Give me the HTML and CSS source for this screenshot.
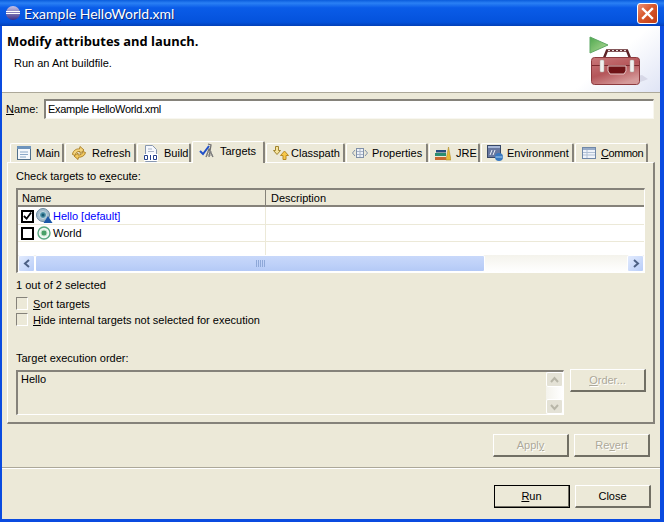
FILE: index.html
```html
<!DOCTYPE html>
<html lang="en">

<head>
  <meta charset="UTF-8">
  <title>Example HelloWorld.xml</title>
  <link rel="stylesheet" href="styles.css">
</head>

<body>
  <div class="window">
    <div class="titlebar">
      <svg class="title-icon" width="16" height="16" viewBox="0 0 16 16">
        <defs>
          <linearGradient id="ecl" x1="0" y1="0" x2="0" y2="1">
            <stop offset="0" stop-color="#c8c4e8" />
            <stop offset="1" stop-color="#3b2f86" />
          </linearGradient>
        </defs>
        <circle cx="8" cy="8" r="7" fill="url(#ecl)" />
        <path d="M1 6.5h14M1 8.5h14" stroke="#fff" stroke-width="1" />
      </svg>
      <span class="title-text">Example HelloWorld.xml</span>
      <div class="close-btn">
        <svg width="21" height="21" viewBox="0 0 21 21">
          <path d="M6 6l9 9M15 6l-9 9" stroke="#fff" stroke-width="2.4" stroke-linecap="square" />
        </svg>
      </div>
    </div>

    <div class="client">
      <!-- banner -->
      <div class="header">
        <div class="header-text">
          <div class="header-title">Modify attributes and launch.</div>
          <div class="header-sub">Run an Ant buildfile.</div>
        </div>
        <svg class="toolbox" width="60" height="54" viewBox="0 0 60 54">
          <defs>
            <linearGradient id="play" x1="0" y1="0" x2="1" y2="1">
              <stop offset="0" stop-color="#4fa84f" />
              <stop offset="1" stop-color="#b4dc98" />
            </linearGradient>
            <linearGradient id="box" x1="0" y1="0" x2="0.6" y2="1">
              <stop offset="0" stop-color="#c9787a" />
              <stop offset="0.55" stop-color="#b5565a" />
              <stop offset="1" stop-color="#d59a9a" />
            </linearGradient>
          </defs>
          <path d="M2 1l18 8-18 8z" fill="url(#play)" stroke="#5fa865" stroke-width="1" />
          <path d="M16 22l3-7.500h20l3 7.500" fill="none" stroke="#5c2226" stroke-width="2.400" />
          <path d="M20 14.500h18" stroke="#e8dcdc" stroke-width="1" stroke-dasharray="2 2" />
          <path d="M6 48q40 2 54-5l-6-4z" fill="#cfcfe0" opacity="0.7" />
          <rect x="3.500" y="21.500" width="48" height="27" rx="3" fill="url(#box)" stroke="#8d3a3e" />
          <path d="M4 29.500h47" stroke="#7c2a2e" stroke-width="1" />
          <path d="M20 30h18v5l-2 3H22l-2-3z" fill="#6e1216" stroke="#e6c6c6" stroke-width="1" />
          <rect x="12" y="24" width="4" height="12" rx="1" fill="#f0f0ee" stroke="#a8a8a0" stroke-width="0.5" />
          <rect x="42" y="24" width="4" height="12" rx="1" fill="#f0f0ee" stroke="#a8a8a0" stroke-width="0.5" />
        </svg>
      </div>

      <div class="name-row">
        <label class="name-label"><u>N</u>ame:</label>
        <div class="name-input">Example HelloWorld.xml</div>
      </div>

      <!-- tab folder -->
      <div class="tabs">
        <div class="tab tab-main">
          <svg width="16" height="16" viewBox="0 0 16 16">
            <rect x="1.5" y="1.5" width="13" height="13" fill="#f4f8fc" stroke="#50708c" />
            <rect x="1" y="1" width="14" height="3" fill="#6e94bc" />
            <path d="M4 7h8M4 9.500h8M4 12h6" stroke="#8aa8c8" />
          </svg>
          <span>Main</span>
        </div>
        <div class="tab tab-refresh">
          <svg width="16" height="16" viewBox="0 0 16 16">
            <path d="M1.500 9.500C2 5 6 3.500 8.500 4L9 1.500 13 5 9 8.500V6.500C6 6 4.500 8 4 10.500z" fill="#f4d47c" stroke="#a87c20" stroke-width="0.900" />
            <path d="M14.500 7.500C14 11 10 12.500 7.500 12.200L7 14.500 3 11 7 8v2C10 10.300 11.500 8.500 12 6.500z" fill="#f0c860" stroke="#a87c20" stroke-width="0.900" />
          </svg>
          <span>Refresh</span>
        </div>
        <div class="tab tab-build">
          <svg width="16" height="17" viewBox="0 0 16 17">
            <path d="M2.500 .5h7l4 4v12h-11z" fill="#f6f8fc" stroke="#8898b0" />
            <path d="M5 4h4M5 6.500h6" stroke="#a8b4c8" />
            <rect x="1" y="9" width="14" height="7" fill="#fff" />
            <path d="M1.500 10.500h3v4h-3zM7.500 10v5M10.500 10.500h3v4h-3z" fill="none" stroke="#24408c" />
          </svg>
          <span>Build</span>
        </div>
        <div class="tab tab-targets selected">
          <svg width="17" height="16" viewBox="0 0 17 16">
            <path d="M9 1l3 1-2 12M7 14l3-8 4 8" fill="none" stroke="#707070" stroke-width="1.300" />
            <path d="M8 9h5M7 12h7" stroke="#909090" />
            <path d="M1 8l3 3 6-8" fill="none" stroke="#2050c8" stroke-width="2" />
          </svg>
          <span>Targets</span>
        </div>
        <div class="tab tab-classpath">
          <svg width="17" height="16" viewBox="0 0 17 16">
            <path d="M3.500 1.500h3v4h2L5 9.500 1.500 5.500h2z" fill="#f6e49c" stroke="#a08430" />
            <path d="M11 14.500v-4H8.500L12.500 6l4 4.500H14v4z" fill="#f8c848" stroke="#b88a24" />
          </svg>
          <span>Classpath</span>
        </div>
        <div class="tab tab-properties">
          <svg width="16" height="16" viewBox="0 0 16 16">
            <path d="M3 5L0.500 8 3 11M13 5l2.500 3-2.500 3" fill="none" stroke="#8090a8" />
            <rect x="4.500" y="3.500" width="7" height="9" fill="#eef2f8" stroke="#8090a8" />
            <path d="M8 4v8M5 6.500h6M5 9.500h6" stroke="#a8b4c8" />
          </svg>
          <span>Properties</span>
        </div>
        <div class="tab tab-jre">
          <svg width="16" height="16" viewBox="0 0 16 16">
            <rect x="0" y="12" width="11" height="3" fill="#c86830" />
            <rect x="0" y="8" width="11" height="3" fill="#2c8c70" />
            <rect x="1" y="5" width="10" height="2.500" fill="#284c80" />
            <path d="M11 15l2.500-13L16 15z" fill="#e8b838" stroke="#a88420" stroke-width="0.500" />
          </svg>
          <span>JRE</span>
        </div>
        <div class="tab tab-environment">
          <svg width="16" height="16" viewBox="0 0 16 16">
            <rect x="0.500" y="0.500" width="13" height="12" fill="#6878a0" stroke="#384868" />
            <rect x="1" y="1" width="12" height="2" fill="#a8b8d8" />
            <path d="M3 10l2-5M6 10l2-5" stroke="#f0f4fa" />
            <circle cx="12" cy="12" r="4" fill="#3878c0" />
            <path d="M8.500 12h7" stroke="#a8d0f0" />
          </svg>
          <span>Environment</span>
        </div>
        <div class="tab tab-common">
          <svg width="16" height="16" viewBox="0 0 16 16">
            <rect x="1.500" y="2.500" width="13" height="11" fill="#f0f4fa" stroke="#7088a8" />
            <rect x="2" y="3" width="12" height="2" fill="#98acc8" />
            <path d="M2 7.500h12M2 10h12M6 5v8" stroke="#b0c0d4" />
          </svg>
          <span><u>C</u>ommon</span>
        </div>
      </div>

      <div class="panel">
        <div class="panel-label">Check targets to e<u>x</u>ecute:</div>

        <div class="table">
          <div class="table-head">
            <div class="col-name">Name</div>
            <div class="col-desc">Description</div>
          </div>
          <div class="table-row table-row-first">
            <div class="cell-name">
              <span class="tree-check checked">
                <svg width="10" height="10" viewBox="0 0 10 10">
                  <path d="M1 5l3 3 5-7" fill="none" stroke="#000" stroke-width="2" />
                </svg>
              </span>
              <svg class="target-icon" width="17" height="16" viewBox="0 0 17 16">
                <circle cx="7" cy="7" r="6.500" fill="#a4bccc" stroke="#6888a0" />
                <circle cx="7" cy="7" r="3.500" fill="#4c90a8" stroke="#c8dce4" />
                <circle cx="7" cy="7" r="1.500" fill="#185870" />
                <path d="M12 8l4.500 7h-9z" fill="#1c58a8" />
              </svg>
              <span class="default-target">Hello [default]</span>
            </div>
            <div class="cell-desc"></div>
          </div>
          <div class="table-row">
            <div class="cell-name">
              <span class="tree-check"></span>
              <svg class="target-icon" width="17" height="16" viewBox="0 0 17 16">
                <circle cx="8" cy="8" r="6" fill="#f0f8f4" stroke="#58a880" stroke-width="1.400" />
                <circle cx="8" cy="8" r="3" fill="#48a068" stroke="#c0e0c8" />
              </svg>
              <span>World</span>
            </div>
            <div class="cell-desc"></div>
          </div>
          <div class="table-row table-row-empty">
            <div class="cell-name"></div>
            <div class="cell-desc"></div>
          </div>
          <div class="hscroll">
            <div class="sb-btn">
              <svg width="8" height="9" viewBox="0 0 8 9"><path d="M6 1L2 4.500 6 8" fill="none" stroke="#4d6185" stroke-width="2" /></svg>
            </div>
            <div class="sb-thumb">
              <svg width="9" height="7" viewBox="0 0 9 7"><path d="M.5 0v7M2.500 0v7M4.500 0v7M6.500 0v7M8.500 0v7" stroke="#8ea8d8" /></svg>
            </div>
            <div class="sb-track"></div>
            <div class="sb-btn">
              <svg width="8" height="9" viewBox="0 0 8 9"><path d="M2 1l4 3.500L2 8" fill="none" stroke="#4d6185" stroke-width="2" /></svg>
            </div>
          </div>
        </div>

        <div class="selected-count">1 out of 2 selected</div>
        <div class="check-row">
          <span class="check"></span>
          <span><u>S</u>ort targets</span>
        </div>
        <div class="check-row">
          <span class="check"></span>
          <span><u>H</u>ide internal targets not selected for execution</span>
        </div>

        <div class="order-label">Target execution order:</div>
        <div class="order-row">
          <div class="order-box">
            <div class="order-text">Hello</div>
            <div class="vscroll">
              <div class="sb-btn-off">
                <svg width="9" height="8" viewBox="0 0 9 8"><path d="M1 6l3.500-4L8 6" fill="none" stroke="#b8b6a8" stroke-width="2" /></svg>
              </div>
              <div class="vscroll-track"></div>
              <div class="sb-btn-off">
                <svg width="9" height="8" viewBox="0 0 9 8"><path d="M1 2l3.500 4L8 2" fill="none" stroke="#b8b6a8" stroke-width="2" /></svg>
              </div>
            </div>
          </div>
          <div class="btn disabled"><span><u>O</u>rder...</span></div>
        </div>
      </div>

      <div class="apply-row">
        <div class="btn disabled"><span>Appl<u>y</u></span></div>
        <div class="btn disabled"><span>Re<u>v</u>ert</span></div>
      </div>
      <div class="separator"></div>
      <div class="action-row">
        <div class="btn default"><span><u>R</u>un</span></div>
        <div class="btn"><span>Close</span></div>
      </div>
    </div>
  </div>
</body>

</html>
```

FILE: styles.css
```css
* {
  margin: 0px;
  padding: 0px;
  box-sizing: border-box;
}

body {
  width: 664px;
  height: 522px;
  overflow: hidden;
  font-family: "Liberation Sans", Arial, sans-serif;
  font-size: 11px;
  color: #000;
  background-color: #ece9d8;
}

.window {
  width: 664px;
  height: 522px;
  display: flex;
  flex-direction: column;
  background-color: #0a4be0;
}

.titlebar {
  height: 26px;
  flex: none;
  display: flex;
  align-items: center;
  padding: 0px 5px 0px 5px;
  background: linear-gradient(to bottom, #0a5cdc 0%, #2a80f4 12%, #0a5ce8 30%, #0452dc 85%, #0340b8 100%);
}

.title-icon {
  margin-right: 3px;
}

.title-text {
  flex: 1;
  font-family: "Lato", "Liberation Sans", sans-serif;
  font-size: 14px;
  color: #fff;
  text-shadow: 1px 1px 0px #0a2a80;
}

.close-btn {
  width: 21px;
  height: 21px;
  border: 1px solid #fff;
  border-radius: 3px;
  background: linear-gradient(135deg, #e89078 0%, #d8582c 45%, #c03c14 100%);
  margin-right: 1px;
}

.close-btn svg {
  display: block;
  margin: -1px;
}

.client {
  flex: 1;
  display: flex;
  flex-direction: column;
  margin: 0px 4px 3px 2px;
  background-color: #ece9d8;
}

.header {
  height: 67px;
  flex: none;
  display: flex;
  justify-content: space-between;
  padding: 7px 12px 0px 5px;
  background: linear-gradient(140deg, #fff 88%, #dfe4f5 100%);
  border-bottom: 1px solid #aca899;
}

.header-title {
  font-family: "Open Sans", "Liberation Sans", sans-serif;
  font-weight: bold;
  font-size: 12.900px;
  line-height: 16px;
}

.header-sub {
  padding-left: 7px;
  margin-top: 7px;
  line-height: 14px;
}

.toolbox {
  flex: none;
  margin-top: 3px;
}

.name-row {
  display: flex;
  align-items: center;
  padding: 6px 6px 0px 4px;
}

.name-label {
  width: 38px;
}

.name-input {
  flex: 1;
  height: 20px;
  line-height: 17px;
  padding-left: 2px;
  letter-spacing: -0.300px;
  background-color: #fff;
  border-top: 2px solid #85827a;
  border-left: 2px solid #85827a;
  border-right: 1px solid #f8f7f0;
  border-bottom: 1px solid #f8f7f0;
}

.tabs {
  display: flex;
  align-items: flex-end;
  height: 21px;
  margin-top: 22px;
  padding-left: 8px;
  gap: 1px;
  position: relative;
  z-index: 1;
}

.tab {
  height: 19px;
  display: flex;
  align-items: center;
  gap: 4px;
  padding-left: 5px;
  white-space: nowrap;
  border-top: 1px solid #fff;
  border-left: 1px solid #fff;
  border-right: 2px solid #85827a;
  border-radius: 2px 2px 0px 0px;
}

.tab.selected {
  height: 22px;
  margin-bottom: -1px;
  margin-left: 0px;
  padding-left: 6px;
  padding-bottom: 4px;
  background-color: #ece9d8;
}

.tab-main { width: 54px; }
.tab-refresh { width: 71px; gap: 5px; }
.tab-build { width: 54px; gap: 5px; }
.tab-targets { width: 73px; }
.tab-classpath { width: 79px; gap: 2px; }
.tab-properties { width: 82px; }
.tab-jre { width: 51px; gap: 5px; }
.tab-environment { width: 93px; }
.tab-common { width: 73px; letter-spacing: -0.400px; }

.panel {
  width: 648px;
  height: 262px;
  margin-left: 5px;
  flex: none;
  display: flex;
  flex-direction: column;
  padding: 6px 7px 0px 8px;
  border-top: 1px solid #fff;
  border-left: 1px solid #fff;
  border-right: 2px solid #85827a;
  border-bottom: 2px solid #85827a;
}

.panel-label {
  line-height: 14px;
}

.table {
  width: 629px;
  height: 85px;
  flex: none;
  margin-top: 5px;
  margin-left: 0px;
  display: flex;
  flex-direction: column;
  border-top: 2px solid #85827a;
  border-left: 2px solid #85827a;
  border-right: 1px solid #fff;
  border-bottom: 1px solid #fff;
  background-color: #fff;
}

.table-head {
  height: 17px;
  flex: none;
  display: flex;
  line-height: 16px;
  background-color: #ece9d8;
  border-bottom: 2px solid #85827a;
}

.col-name {
  width: 248px;
  padding-left: 4px;
  border-right: 1px solid #85827a;
}

.col-desc {
  padding-left: 5px;
}

.table-row {
  height: 17px;
  flex: none;
  display: flex;
  border-bottom: 1px solid #ece9d8;
}

.table-row-first {
  height: 18px;
}

.table-row-first .cell-name {
  padding-top: 1px;
}

.table-row-empty {
  flex: 1;
  border-bottom: none;
}

.cell-name {
  width: 248px;
  display: flex;
  align-items: center;
  padding-left: 3px;
  border-right: 1px solid #ece9d8;
}

.default-target {
  color: #0000ff;
}

.tree-check {
  width: 13px;
  height: 13px;
  display: flex;
  align-items: center;
  justify-content: center;
  border: 2px solid #000;
  background-color: #fff;
  flex: none;
}

.target-icon {
  margin: 0px 0px 0px 2px;
  flex: none;
}

.hscroll {
  height: 17px;
  flex: none;
  display: flex;
  background: linear-gradient(to bottom, #f4f3ec, #fff);
}

.sb-btn {
  width: 17px;
  display: flex;
  align-items: center;
  justify-content: center;
  border: 1px solid #fff;
  border-radius: 2px;
  background: linear-gradient(135deg, #e2ebfe, #b8cdf8);
}

.sb-thumb {
  width: 450px;
  display: flex;
  align-items: center;
  justify-content: center;
  padding-left: 0px;
  border: 1px solid #fff;
  border-radius: 2px;
  background: linear-gradient(to bottom, #c8d8fa, #bdd0f8 60%, #b4c9f6);
}

.sb-track {
  flex: 1;
}

.selected-count {
  line-height: 14px;
  margin-top: 5px;
}

.check-row {
  display: flex;
  align-items: center;
  gap: 5px;
  height: 13px;
  margin-top: 3px;
}

.selected-count + .check-row {
  margin-top: 5px;
}

.check {
  width: 12px;
  height: 13px;
  flex: none;
  border-top: 1px solid #85827a;
  border-left: 1px solid #85827a;
  border-right: 1px solid #fff;
  border-bottom: 1px solid #fff;
}

.order-label {
  line-height: 14px;
  margin-top: 25px;
}

.order-row {
  display: flex;
  align-items: flex-start;
  gap: 6px;
  margin-top: 4px;
}

.order-box {
  width: 548px;
  height: 45px;
  margin-top: 1px;
  display: flex;
  justify-content: space-between;
  border-top: 2px solid #85827a;
  border-left: 2px solid #85827a;
  border-right: 1px solid #fff;
  border-bottom: 1px solid #fff;
}

.order-text {
  padding-left: 3px;
  line-height: 14px;
}

.vscroll {
  width: 17px;
  display: flex;
  flex-direction: column;
  background: linear-gradient(to right, #f4f3ec, #fff);
}

.vscroll-track {
  flex: 1;
}

.sb-btn-off {
  height: 15px;
  display: flex;
  align-items: center;
  justify-content: center;
  border: 1px solid #fff;
  border-radius: 2px;
  background-color: #e4e2d6;
}

.btn {
  width: 76px;
  height: 23px;
  flex: none;
  display: flex;
  align-items: center;
  justify-content: center;
  border-top: 1px solid #fff;
  border-left: 1px solid #fff;
  border-right: 2px solid #716f64;
  border-bottom: 2px solid #716f64;
}

.btn.disabled {
  color: #aca899;
  text-shadow: 1px 1px 0px #fff;
}

.btn.default {
  outline: 1px solid #000;
  outline-offset: -1px;
}

.apply-row {
  display: flex;
  justify-content: flex-end;
  gap: 5px;
  margin-top: 10px;
  padding-right: 10px;
}

.separator {
  height: 2px;
  flex: none;
  margin-top: 10px;
  background-color: #aca899;
  border-bottom: 1px solid #fff;
}

.action-row {
  display: flex;
  justify-content: flex-end;
  gap: 5px;
  margin-top: 16px;
  padding-right: 9px;
}
```
